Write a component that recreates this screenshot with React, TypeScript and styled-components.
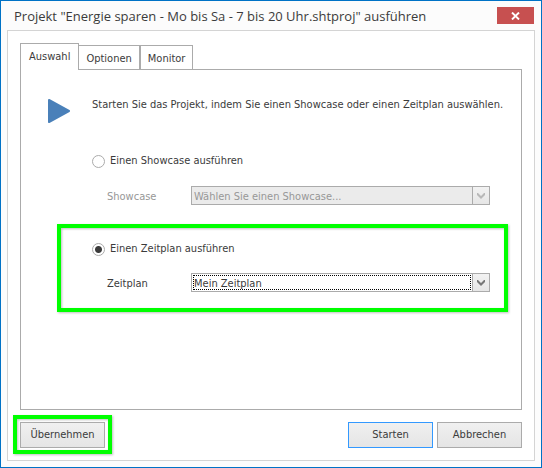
import React, { useState } from "react";
import styled, { createGlobalStyle, css } from "styled-components";

const GlobalStyle = createGlobalStyle`
  *, *::before, *::after { box-sizing: border-box; }
  body { margin: 0; background: #fcfcfc; }
  button, select, input { font: inherit; color: inherit; margin: 0; }
`;

const bodyFont = '"DejaVu Sans Condensed", "DejaVu Sans", Tahoma, sans-serif';
const line = "#ababab";

const marker = css`
  position: relative;
  &::after {
    content: "";
    position: absolute;
    border: 4px solid #00ff00;
    filter: drop-shadow(1px 1px 1px rgba(0, 0, 0, 0.25));
    pointer-events: none;
  }
`;

const Dialog = styled.main`
  display: flex;
  flex-direction: column;
  min-height: 100vh;
  border: 1px solid #0072c6;
  background: #fcfcfc;
  color: #3b3b3b;
  font: 11px/14px ${bodyFont};
`;

const TitleBar = styled.header`
  display: flex;
  align-items: flex-start;
  justify-content: space-between;
  height: 29px;
  padding: 6px 7px 0 13px;
`;

const Title = styled.h1`
  margin: 0;
  font: 400 13px/18px "Open Sans", "Segoe UI", sans-serif;
  white-space: nowrap;
`;

const CloseButton = styled.button`
  display: flex;
  align-items: center;
  justify-content: center;
  width: 37px;
  height: 17px;
  padding: 0;
  border: 0;
  background: #c75050;
  color: #fff;
`;

const Body = styled.div`
  flex: 1;
  display: flex;
  flex-direction: column;
  margin: 0 6px 6px;
  padding: 12px;
  border: 1px solid #d4d4d4;
  background: #fff;
`;

const TabList = styled.div`
  display: flex;
  align-items: flex-end;
`;

const Tab = styled.button<{ $active: boolean }>`
  position: relative;
  height: ${(p) => (p.$active ? 27 : 24)}px;
  padding: ${(p) => (p.$active ? "0 8px" : "2px 7px 0")};
  border: 1px solid ${line};
  border-bottom: 0;
  background: #fff;
  white-space: nowrap;
  margin-bottom: ${(p) => (p.$active ? -1 : 0)}px;
  z-index: ${(p) => (p.$active ? 1 : 0)};
  &:nth-child(2) { border-left: 0; }
`;

const Panel = styled.section`
  flex: 1;
  padding: 28px 31px 28px 27px;
  border: 1px solid ${line};
`;

const Intro = styled.div`
  display: flex;
  align-items: flex-start;
  gap: 22px;
  svg { flex: none; }
  p { margin: 0; white-space: nowrap; }
`;

const Options = styled.form`
  display: flex;
  flex-direction: column;
  gap: 37px;
  margin: 30px 0 0 44px;
`;

const Option = styled.div<{ $marked?: boolean }>`
  display: flex;
  flex-direction: column;
  gap: 18px;
  ${(p) =>
    p.$marked &&
    css`
      ${marker}
      gap: 17px;
      &::after { inset: -18px -18px -20px -35px; }
    `}
`;

const RadioLabel = styled.label`
  display: flex;
  align-items: center;
  gap: 5px;
  height: 14px;
  line-height: 14px;
`;

const Radio = styled.input`
  appearance: none;
  flex: none;
  width: 13px;
  height: 13px;
  border: 1px solid ${line};
  border-radius: 50%;
  background: #fff;
  &:checked { background: radial-gradient(circle, #3b3b3b 3px, #fff 4px); }
`;

const Field = styled.div<{ $disabled: boolean }>`
  display: grid;
  grid-template-columns: 84px 1fr;
  align-items: center;
  padding-left: 15px;
  color: ${(p) => (p.$disabled ? "#979797" : "#3b3b3b")};
  label { padding-top: 2px; }
`;

const Combo = styled.div<{ $ring: boolean }>`
  position: relative;
  display: flex;
  svg { color: ${(p) => (p.$ring ? "#777" : "#b8b8b8")}; }
  ${(p) =>
    p.$ring &&
    css`
      &::before {
        content: "";
        position: absolute;
        inset: 2px 19px 2px 2px;
        border: 1px dotted #000;
        pointer-events: none;
      }
    `}
`;

const Select = styled.select`
  appearance: none;
  width: 100%;
  height: 19px;
  padding: 2px 20px 0 2px;
  border: 1px solid ${line};
  border-radius: 0;
  outline: 0;
  background: #fff;
  line-height: 15px;
  &:disabled { background: #ebebeb; opacity: 1; color: #979797; }
`;

const Arrow = styled.span`
  position: absolute;
  inset: 0 0 0 auto;
  display: flex;
  align-items: center;
  justify-content: center;
  width: 18px;
  border: 1px solid ${line};
  background: linear-gradient(#f2f2f2, #e6e6e6);
  pointer-events: none;
`;

const Footer = styled.footer`
  display: flex;
  gap: 4px;
  margin-top: 12px;
`;

const Marked = styled.div`
  ${marker}
  margin-right: auto;
  &::after { inset: -7px -7px -6px; }
`;

const Button = styled.button<{ $primary?: boolean }>`
  width: 85px;
  height: 26px;
  padding: 0;
  border: 1px solid ${(p) => (p.$primary ? "#3399ff" : line)};
  background: linear-gradient(#f0f0f0, #e5e5e5);
`;

type ComboBoxProps = { id: string; value: string; disabled: boolean };

function ComboBox({ id, value, disabled }: ComboBoxProps) {
  return (
    <Combo $ring={!disabled}>
      <Select id={id} disabled={disabled}>
        <option>{value}</option>
      </Select>
      <Arrow>
        <svg width="8" height="6" viewBox="0 0 8 6" aria-hidden="true">
          <path d="M0 0h1l3 3 3-3h1v2L4 6 0 2z" fill="currentColor" />
        </svg>
      </Arrow>
    </Combo>
  );
}

const tabs = ["Auswahl", "Optionen", "Monitor"];

const choices = [
  { id: "showcase", title: "Einen Showcase ausführen", label: "Showcase", value: "Wählen Sie einen Showcase..." },
  { id: "zeitplan", title: "Einen Zeitplan ausführen", label: "Zeitplan", value: "Mein Zeitplan" },
];

export default function App() {
  const [tab, setTab] = useState("Auswahl");
  const [mode, setMode] = useState("zeitplan");

  return (
    <>
      <GlobalStyle />
      <Dialog>
        <TitleBar>
          <Title>Projekt "Energie sparen - Mo bis Sa - 7 bis 20 Uhr.shtproj" ausführen</Title>
          <CloseButton type="button" aria-label="Schließen">
            <svg width="9" height="8" viewBox="0 0 9 8" aria-hidden="true">
              <path d="M1 0.5L8 7.5M8 0.5L1 7.5" stroke="currentColor" strokeWidth="1.9" />
            </svg>
          </CloseButton>
        </TitleBar>
        <Body>
          <TabList role="tablist">
            {tabs.map((name) => (
              <Tab
                key={name}
                type="button"
                role="tab"
                aria-selected={tab === name}
                $active={tab === name}
                onClick={() => setTab(name)}
              >
                {name}
              </Tab>
            ))}
          </TabList>
          <Panel role="tabpanel">
            <Intro>
              <svg width="22" height="26" viewBox="0 0 22 26" aria-hidden="true">
                <path d="M1 2L21 13L1 24z" fill="#4a80b9" stroke="#4a80b9" strokeWidth="2" strokeLinejoin="round" />
              </svg>
              <p>Starten Sie das Projekt, indem Sie einen Showcase oder einen Zeitplan auswählen.</p>
            </Intro>
            <Options>
              {choices.map((c) => (
                <Option key={c.id} $marked={c.id === "zeitplan"}>
                  <RadioLabel>
                    <Radio type="radio" name="mode" checked={mode === c.id} onChange={() => setMode(c.id)} />
                    {c.title}
                  </RadioLabel>
                  <Field $disabled={mode !== c.id}>
                    <label htmlFor={c.id}>{c.label}</label>
                    <ComboBox id={c.id} value={c.value} disabled={mode !== c.id} />
                  </Field>
                </Option>
              ))}
            </Options>
          </Panel>
          <Footer>
            <Marked>
              <Button type="button">Übernehmen</Button>
            </Marked>
            <Button type="button" $primary>Starten</Button>
            <Button type="button">Abbrechen</Button>
          </Footer>
        </Body>
      </Dialog>
    </>
  );
}
